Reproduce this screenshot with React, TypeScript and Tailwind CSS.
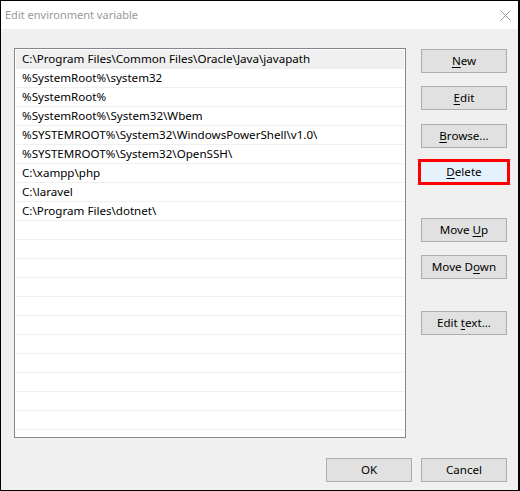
const paths = [
  'C:\\Program Files\\Common Files\\Oracle\\Java\\javapath',
  '%SystemRoot%\\system32',
  '%SystemRoot%',
  '%SystemRoot%\\System32\\Wbem',
  '%SYSTEMROOT%\\System32\\WindowsPowerShell\\v1.0\\',
  '%SYSTEMROOT%\\System32\\OpenSSH\\',
  'C:\\xampp\\php',
  'C:\\laravel',
  'C:\\Program Files\\dotnet\\',
];

const ROW_COUNT = 21;

function Btn({ children, className = '' }: { children: React.ReactNode; className?: string }) {
  return (
    <div
      className={`flex h-[24px] w-[86px] shrink-0 items-center justify-center border border-[#adadad] bg-[#e1e1e1] text-[11.6px] text-black ${className}`}
    >
      <span>{children}</span>
    </div>
  );
}

function Key({ children }: { children: React.ReactNode }) {
  return <span className="underline underline-offset-2">{children}</span>;
}

export default function App() {
  const rows = Array.from({ length: ROW_COUNT }, (_, i) => paths[i] ?? '');

  return (
    <div
      className="flex h-[491px] w-[520px] flex-col border-t border-l border-b border-r-2 border-black bg-[#f0f0f0]"
      style={{ fontFamily: '"Noto Sans", "Open Sans", sans-serif' }}
    >
      {/* title bar */}
      <div className="flex h-[28px] shrink-0 items-center justify-between bg-white pl-[4px] pr-[7px]">
        <span className="text-[11px] text-[#999999]">Edit environment variable</span>
        <svg width="11" height="11" viewBox="0 0 11 11" className="mt-[1px]">
          <path d="M0.5 0.5 L10.5 10.5 M10.5 0.5 L0.5 10.5" stroke="#999999" strokeWidth="1" />
        </svg>
      </div>

      <div className="flex flex-1 flex-col pl-[13px] pr-[11px]">
        <div className="flex gap-[15px]">
          {/* path list */}
          <div className="mt-[19px] h-[390px] w-[392px] shrink-0 overflow-hidden border border-[#828790] bg-white p-[1px]">
            {rows.map((p, i) => (
              <div
                key={i}
                className={`flex h-[19px] items-center whitespace-nowrap border-b border-[#f0f0f0] pl-[6px] text-[11.6px] text-black ${
                  i === 0 ? 'bg-[#f0f0f0]' : ''
                }`}
              >
                {p}
              </div>
            ))}
          </div>

          {/* side buttons */}
          <div className="mt-[20px] flex flex-col">
            <Btn>
              <Key>N</Key>ew
            </Btn>
            <Btn className="mt-[13px]">
              <Key>E</Key>dit
            </Btn>
            <Btn className="mt-[14px]">
              <Key>B</Key>rowse...
            </Btn>
            <div className="-ml-[3px] mt-[11px] flex h-[26px] w-[92px] items-center justify-center border-[3px] border-[#ff0000] bg-[#e5f1fb] text-[11.6px] text-black">
              <span>
                <Key>D</Key>elete
              </span>
            </div>
            <Btn className="mt-[33px]">
              Move <Key>U</Key>p
            </Btn>
            <Btn className="mt-[13px]">
              Move D<Key>o</Key>wn
            </Btn>
            <Btn className="mt-[32px]">
              Edit <Key>t</Key>ext...
            </Btn>
          </div>
        </div>

        {/* footer */}
        <div className="mt-[20px] flex justify-end gap-[9px]">
          <Btn>OK</Btn>
          <Btn>Cancel</Btn>
        </div>
      </div>
    </div>
  );
}
